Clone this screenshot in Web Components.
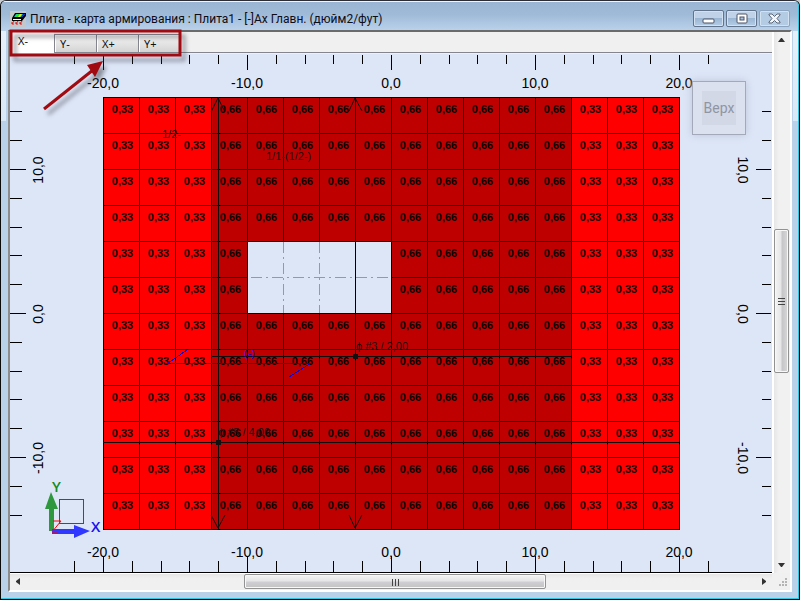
<!DOCTYPE html>
<html lang="ru">
<head>
<meta charset="utf-8">
<title>Плита - карта армирования</title>
<style>
html, body { margin: 0; height: 100%; }
body { background: #c9ccd0; font-family: "Liberation Sans", sans-serif; overflow: hidden; }
</style>
</head>
<body>
<app-window>
  <window-title slot="title">Плита - карта армирования : Плита1 - [-]Ax Главн. (дюйм2/фут)</window-title>
  <tab-strip slot="tabs">
    <tab-item selected>X-</tab-item>
    <tab-item>Y-</tab-item>
    <tab-item>X+</tab-item>
    <tab-item>Y+</tab-item>
  </tab-strip>
  <slab-view slot="view">
    <axis-ruler side="top"></axis-ruler>
    <axis-ruler side="left"></axis-ruler>
    <axis-ruler side="right"></axis-ruler>
    <axis-ruler side="bottom"></axis-ruler>
    <slab-map></slab-map>
    <view-cube>Верх</view-cube>
    <axis-triad></axis-triad>
  </slab-view>
  <scroll-bar slot="vscroll" direction="vertical" before="181" thumb="142" after="184"></scroll-bar>
  <scroll-bar slot="hscroll" direction="horizontal" before="217" thumb="300" after="209"></scroll-bar>
  <callout-mark slot="overlay"></callout-mark>
</app-window>

<script>
function define(name, html, setup) {
  const template = document.createElement('template');
  template.innerHTML = html;
  customElements.define(name, class extends HTMLElement {
    constructor() {
      super();
      this.attachShadow({ mode: 'open' }).append(template.content.cloneNode(true));
    }
    connectedCallback() {
      if (setup && !this.ready) { this.ready = true; setup(this, this.shadowRoot); }
    }
  });
}

define('app-window', `
<style>
:host { display: block; height: 100vh; min-height: 520px; box-sizing: border-box; position: relative;
  border: 1px solid #0a0a0a; border-top-color: #2c2c34; border-radius: 6px 6px 0 0; background: #bad1ea; }
.frame { display: flex; flex-direction: column; height: 100%; box-sizing: border-box; padding: 0 6px 6px 7px;
  border: solid #35c5e0; border-width: 0 1px 1px 0; border-radius: 5px 5px 0 0;
  background: linear-gradient(#e6f0fa, #d9e8f6) 0 30px / 5px 90px no-repeat,
    linear-gradient(#e6f0fa, #d9e8f6) 100% 30px / 5px 90px no-repeat,
    linear-gradient(#eef5fb 0 1px, #9ab5d3 1px, #a0bbd8 14px, #bad1ea 29px); }
.body { flex: 1; min-height: 0; display: grid; grid-template: auto 1fr 17px / 1fr 18px;
  border: 2px solid #fff; border-top-color: #6b6b6b; border-left-color: #8c8c8c; background: #f0f0f0; }
.v { grid-area: 1 / 2 / 3 / 3; display: grid; }
.t { grid-area: 1 / 1; } .c { grid-area: 2 / 1; display: grid; min-height: 0; min-width: 0; } .h { grid-area: 3 / 1; display: grid; }
.grip { grid-area: 3 / 2; place-self: end; margin: 0 3px 3px 0; }
</style>
<div class="frame">
  <slot name="title"></slot>
  <div class="body">
    <div class="t"><slot name="tabs"></slot></div>
    <div class="c"><slot name="view"></slot></div>
    <div class="v"><slot name="vscroll"></slot></div>
    <div class="h"><slot name="hscroll"></slot></div>
    <svg class="grip" width="9" height="9" fill="#b4b4b4"><path d="M7 0h2v2h-2zM4 3h2v2h-2zM7 3h2v2h-2zM1 6h2v2h-2zM4 6h2v2h-2zM7 6h2v2h-2z"/></svg>
  </div>
</div>
<slot name="overlay"></slot>`);

define('window-title', `
<style>
:host { display: flex; align-items: center; height: 29px; flex: none; font: 12px Roboto, sans-serif; color: #0c0c18; }
.icon { margin: 6px 4px 0 2px; flex: none; }
.text { flex: 1; padding-top: 7px; white-space: nowrap; overflow: hidden; }
.buttons { display: flex; gap: 2px; padding: 6px 2px 0 0; }
button { width: 31px; height: 17px; box-sizing: border-box; padding: 0; display: grid; place-items: center; border: 1px solid #61748c;
  border-radius: 2px; box-shadow: inset 0 0 0 1px #d3e2f2; background: linear-gradient(#bfd2e7 50%, #9bb6d3 50%, #b5cde6); }
button.close { border-color: #8ca4bf; background: #b4cbe4; }
</style>
<svg class="icon" width="16" height="16" viewBox="0 0 16 16">
  <rect width="16" height="16" fill="#c5c8cb"/>
  <path d="M5 2H16V5L12 10H2V7Z" fill="#000"/>
  <path d="M6 3H15L12 6H4Z" fill="#19b9c8"/>
  <path d="M7 3H11L9 6H5Z" fill="#22e02c"/><path d="M10 3H12L10 6H8Z" fill="#f7f000"/><path d="M13 3H15L12 6H11Z" fill="#1414e0"/>
  <path d="M3 8H11V9H3Z" fill="#fff"/>
  <path d="M4 10L2 13M2 11V13H4M8 10L6 13M6 11V13H8M12 10L10 13M10 11V13H12" stroke="#e41818" fill="none"/>
</svg>
<span class="text"><slot></slot></span>
<div class="buttons">
  <button aria-label="Свернуть"><svg width="13" height="11"><rect x="1" y="6" width="11" height="4" rx="1" fill="#fff" stroke="#4c5362"/></svg></button>
  <button aria-label="Развернуть"><svg width="13" height="11"><rect x="2" y="1" width="10" height="9" rx="1" fill="#fff" stroke="#4c5362"/><rect x="5" y="4" width="4" height="3" fill="#a9c2df" stroke="#4c5362"/></svg></button>
  <button class="close" aria-label="Закрыть"><svg width="13" height="11"><path d="M1 1h3l2.500 2.500L9 1h3v1L9 5.500 12 9v1H9L6.500 7.500 4 10H1V9l3-3.500L1 2z" fill="#f4f6f9" stroke="#5a6679"/></svg></button>
</div>`);

define('tab-strip', `
<style>
:host { display: flex; align-items: flex-end; height: 20px; background: #f0f0f0; border-bottom: 1px solid #85858f; margin-bottom: 1px; }
</style>
<slot></slot>`, host => host.setAttribute('role', 'tablist'));

define('tab-item', `
<style>
:host { display: block; }
button { display: block; width: 42px; height: 18px; box-sizing: border-box; padding: 0 0 0 5px; border: solid #85858f;
  border-width: 1px 0 0 1px; text-align: left; font: 11px/16px "Noto Sans", sans-serif; color: #111;
  background: linear-gradient(#f3f3f3, #e6e6e6 45%, #d4d4d4); box-shadow: inset 1px 1px #fff, 1px 0 #85858f; }
:host([selected]) button { width: 44px; height: 20px; padding: 0 0 3px 8px; border: 0; background: #fff; box-shadow: 0 1px #fff; }
</style>
<button role="tab"><slot></slot></button>`, (host, root) => {
  root.querySelector('button').setAttribute('aria-selected', host.hasAttribute('selected'));
});

define('slab-view', `
<style>
:host { display: grid; position: relative; overflow: hidden; background: #dde6f7; border-bottom: 1px solid #000;
  grid-template: 44px 1fr 40px / 48px 1fr 48px; font-size: 14px; }
::slotted(axis-ruler[side=top]) { grid-area: 1 / 1 / 2 / 4; }
::slotted(axis-ruler[side=bottom]) { grid-area: 3 / 1 / 4 / 4; }
::slotted(axis-ruler[side=left]) { grid-area: 1 / 1 / 4 / 2; }
::slotted(axis-ruler[side=right]) { grid-area: 1 / 3 / 4 / 4; }
::slotted(slab-map) { grid-area: 1 / 1 / 4 / 4; place-self: center; }
::slotted(view-cube) { position: absolute; top: 27px; right: 26px; }
::slotted(axis-triad) { position: absolute; left: 30px; bottom: 32px; }
</style>
<slot></slot>`);

/* Scale with a short tick every 2 feet and a long, labelled tick every 10 feet. */
define('axis-ruler', `
<style>
:host { display: block; z-index: 1; min-width: 0; min-height: 0; pointer-events: none; }
svg { display: block; width: 100%; height: 100%; overflow: visible; }
line { stroke: #000; shape-rendering: crispEdges; }
text { font: 14px "Liberation Sans", sans-serif; fill: #000; text-anchor: middle; }
</style>`, (host, root) => {
  const side = host.getAttribute('side');
  const flat = side === 'top' || side === 'bottom';
  const count = flat ? 11 : 7;
  let marks = '';
  for (let i = -count; i <= count; i++) {
    const p = Math.round(i * 144 / 5);
    const major = i % 5 === 0;
    const label = (flat ? i : -i) * 2 + ',0';
    let l;
    if (side === 'top') l = [p, 1, p, major ? 16 : 10];
    if (side === 'bottom') l = [p, 40, p, major ? 24 : 29];
    if (side === 'left') l = [0, p, major ? 16 : 12, p];
    if (side === 'right') l = [47, p, major ? 32 : 38, p];
    marks += `<line x1="${l[0]}" y1="${l[1]}" x2="${l[2]}" y2="${l[3]}"/>`;
    if (!major) continue;
    if (flat) marks += `<text x="${p}" y="${side === 'top' ? 34 : 25}">${label}</text>`;
    else if (side === 'left') marks += `<text transform="translate(33 ${p + 1}) rotate(-90)">${label}</text>`;
    else marks += `<text transform="translate(14 ${p + 1}) rotate(90)">${label}</text>`;
  }
  root.innerHTML += `<svg><svg ${flat ? 'x' : 'y'}="50%" overflow="visible">${marks}</svg></svg>`;
});

define('slab-map', `
<style>
:host { display: block; position: relative; width: 576px; }
table { border-spacing: 0; table-layout: fixed; width: 100%; }
td { box-sizing: border-box; width: 36px; height: 36px; padding: 6px 0 0 2px; border: solid #000; border-width: 1px 0 0 1px;
  vertical-align: top; text-align: center; font: bold 11px/11px "Liberation Sans", sans-serif; color: #140000; background: #f00; }
td.high { background: #bf0000; color: #0c0000; }
td.hole { background: #dde6f7; border-color: transparent; }
svg { position: absolute; inset: 0; overflow: visible; }
g { fill: none; stroke: #111; shape-rendering: crispEdges; }
text { font: 11px "Liberation Sans", sans-serif; fill: #1c1010; }
</style>
<table aria-label="Карта армирования"><tbody></tbody></table>
<svg width="576" height="432">
  <g>
    <path d="M0 0H577M576 0V432M0 432H577" stroke="#000"/>
    <path d="M144 144H288V216H144ZM252 144V216" stroke="#000"/>
    <path d="M180 145V216M216 145V216M148 180H287" stroke="#999" stroke-dasharray="11 4 2 4"/>
    <path d="M115 0V432M0 345H576M108 259H468"/>
  </g>
  <path d="M108 15L115 1L122 15M246 14L252 1L259 14M108 418L115 431L122 418M246 418L252 431L259 418" fill="none" stroke="#111"/>
  <path d="M250 257h5v5h-5zM113 343h5v5h-5z" fill="#111"/>
  <path d="M84 253L65 266H208L186 280" fill="none" stroke="#0a00d8" shape-rendering="crispEdges"/>
  <text x="59" y="41">1/2-</text>
  <text x="163" y="63">1/1-(1/2-)</text>
  <text x="253" y="253">ϕ #3 / 2,00</text>
  <text x="115" y="339">ϕ #5 / 4,00</text>
  <text x="141" y="260" style="fill:#1400e0">(-)</text>
</svg>`, (host, root) => {
  let rows = '';
  for (let r = 0; r < 12; r++) {
    rows += '<tr>';
    for (let c = 0; c < 16; c++) {
      const hole = c > 3 && c < 8 && r > 3 && r < 6;
      const high = c > 2 && c < 13;
      rows += hole ? '<td class="hole"></td>' : high ? '<td class="high">0,66</td>' : '<td>0,33</td>';
    }
    rows += '</tr>';
  }
  root.querySelector('tbody').innerHTML = rows;
});

define('view-cube', `
<style>
:host { display: block; z-index: 2; }
button { width: 54px; height: 54px; box-sizing: border-box; padding: 9px; border: 1px solid #a3a9b8;
  background: #dbe1ee; box-shadow: 0 0 8px #bcc5d8; display: grid; }
span { display: grid; place-items: center; background: #d2d8e6; color: #8f95a3; font: 14px Roboto, sans-serif; }
</style>
<button><span><slot></slot></span></button>`);

define('axis-triad', `
<style>
:host { display: block; z-index: 2; }
svg { display: block; overflow: visible; }
text { font: 600 15px "Open Sans", sans-serif; }
</style>
<svg width="66" height="62" role="img" aria-label="Оси">
  <path d="M19 21H43V45H19Z" fill="none" stroke="#f00" shape-rendering="crispEdges"/>
  <path d="M9 53V31H5L11 14L18 31H14V53Z" fill="#2f983f"/>
  <path d="M12 51H34V47L50 53L34 60V56H12Z" fill="#3038ff"/>
  <text x="12" y="14" fill="#128a1c">Y</text>
  <text x="51" y="54" fill="#1414f0">X</text>
  <path d="M13 43H21L12 54H18" fill="none" stroke="#f00"/>
</svg>`);

define('scroll-bar', `
<style>
:host { display: flex; box-sizing: border-box; background: linear-gradient(90deg, #e6e6e6, #f1f1f1 30%); border-left: 2px solid #fff; padding-right: 1px; flex-direction: column; min-height: 0; }
:host([direction=horizontal]) { flex-direction: row; border-left: 0; border-top: 1px solid #fff; padding: 0 0 1px; background: linear-gradient(#e6e6e6, #f0f0f0 30%); }
button { flex: none; width: 15px; height: 17px; padding: 0; border: 0; background: none; display: grid; place-items: center; }
:host([direction=horizontal]) button { width: 17px; height: 15px; }
.thumb { box-sizing: border-box; border: 1px solid #929292; border-radius: 2px; box-shadow: inset 0 0 0 1px #f8f8f8; display: grid; place-items: center;
  background: linear-gradient(90deg, #f4f4f4, #e6e6e8 45%, #c6c6ca 55%, #d8d8d8); }
:host([direction=horizontal]) .thumb { background: linear-gradient(#f4f4f4, #e6e6e8 45%, #cfcfd3 55%, #c3c3c3); }
</style>
<button class="less"><svg width="7" height="7" fill="#333"></svg></button>
<div class="before"></div>
<div class="thumb"><svg width="8" height="8" stroke="#444" shape-rendering="crispEdges"></svg></div>
<div class="after"></div>
<button class="more"><svg width="7" height="7" fill="#333"></svg></button>`, (host, root) => {
  const flat = host.getAttribute('direction') === 'horizontal';
  for (const part of ['before', 'thumb', 'after']) {
    root.querySelector('.' + part).style.flex = host.getAttribute(part) + ' 1 0px';
  }
  const less = root.querySelector('.less'), more = root.querySelector('.more');
  less.setAttribute('aria-label', flat ? 'Влево' : 'Вверх');
  more.setAttribute('aria-label', flat ? 'Вправо' : 'Вниз');
  less.firstChild.innerHTML = `<path d="${flat ? 'M5 0V7L1 4V3Z' : 'M0 5H7L4 1H3Z'}"/>`;
  more.firstChild.innerHTML = `<path d="${flat ? 'M2 0V7L6 4V3Z' : 'M0 2H7L4 6H3Z'}"/>`;
  root.querySelector('.thumb svg').innerHTML = `<path d="${flat ? 'M1 1V8M4 1V8M7 1V8' : 'M0 1H7M0 4H7M0 7H7'}" stroke-width="1"/>`;
});

/* Frame and arrow that point at the tab strip. */
define('callout-mark', `
<style>
:host { display: block; position: absolute; left: 8px; top: 28px; z-index: 5; pointer-events: none; }
svg { display: block; overflow: visible; filter: drop-shadow(4px 5px 2px rgba(60, 60, 70, .5)); }
</style>
<svg width="174" height="84">
  <rect x="2" y="2" width="169" height="24" fill="none" stroke="#a00a10" stroke-width="3"/>
  <path d="M35 80L84 41" stroke="#a00a10" stroke-width="3"/>
  <path d="M94 32L78 36L86 48Z" fill="#a00a10"/>
</svg>`);
</script>
</body>
</html>
